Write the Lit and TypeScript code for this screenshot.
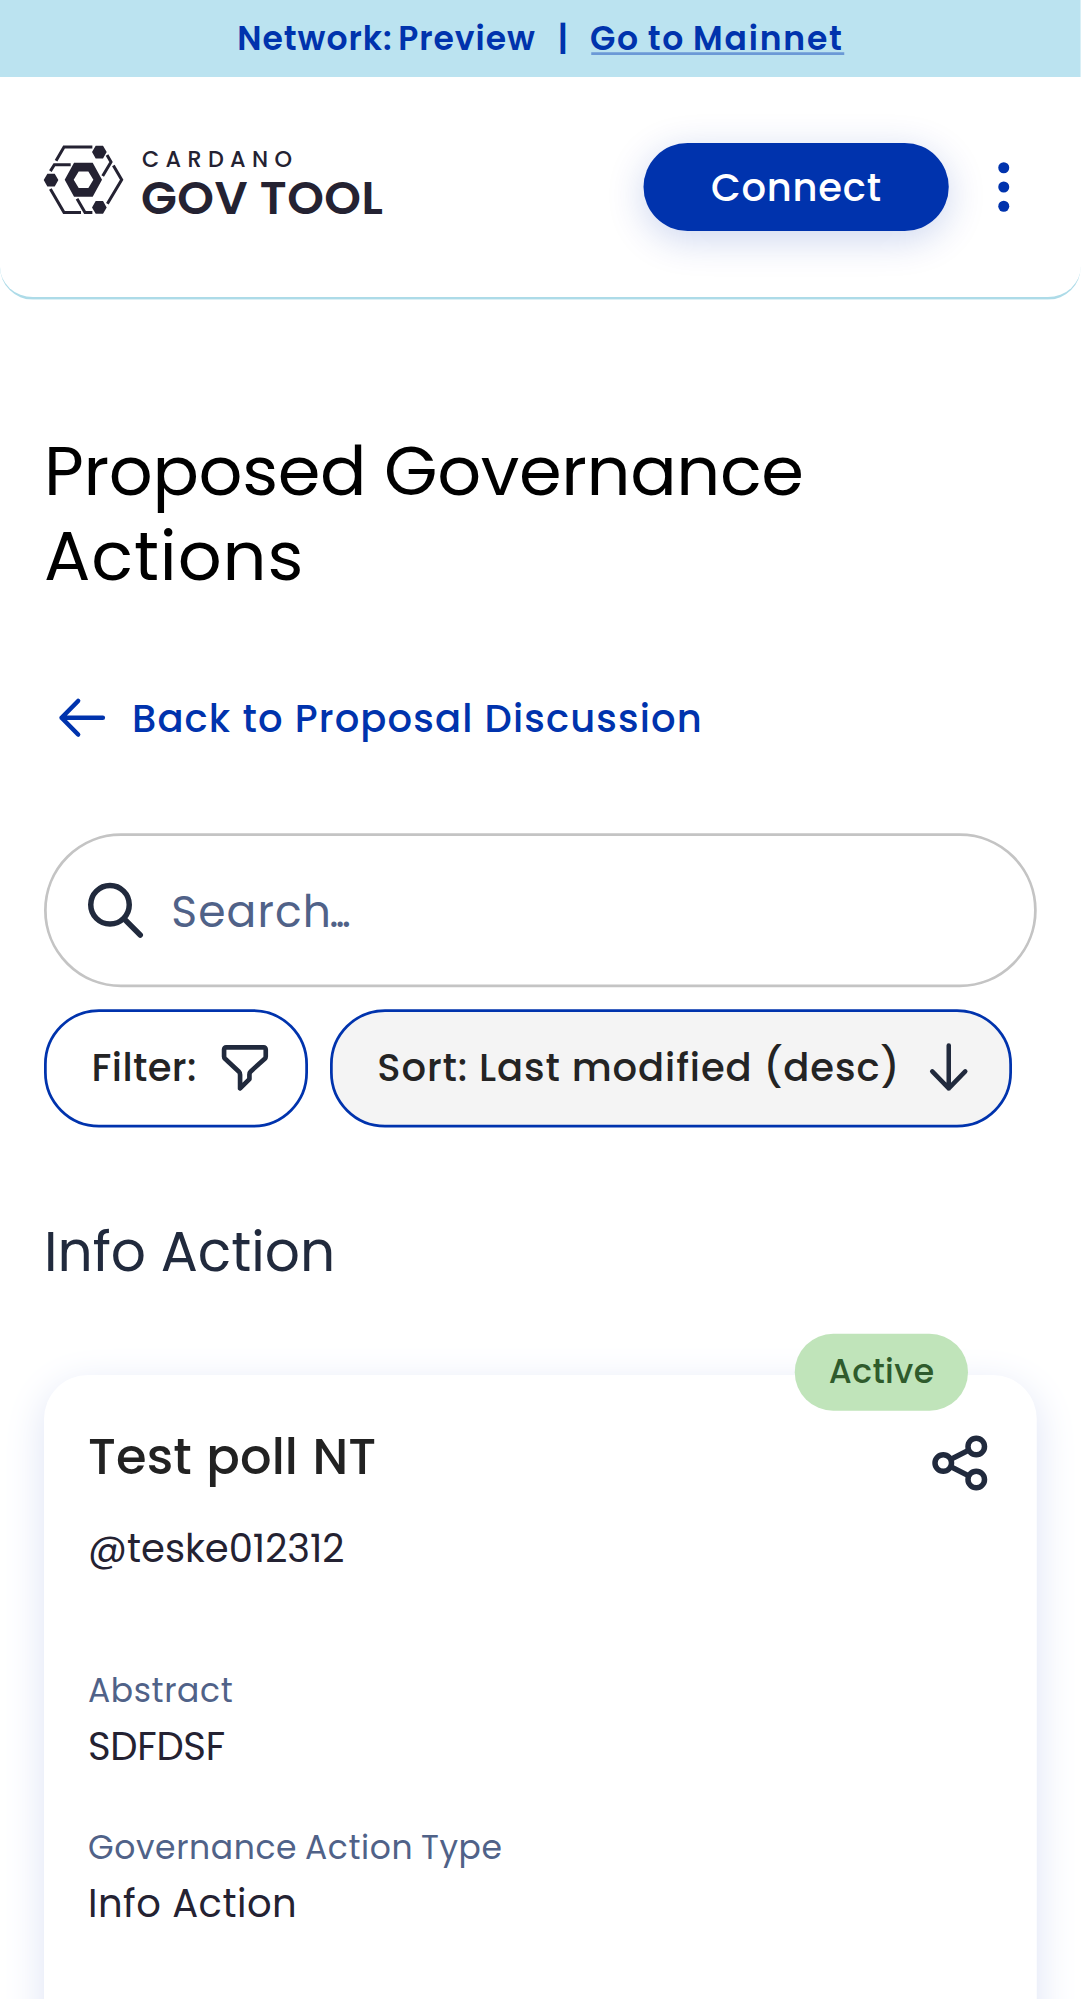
import { LitElement, html, css } from "lit";
import { customElement, property } from "lit/decorators.js";

@customElement("gov-banner")
export class GovBanner extends LitElement {
  static styles = css`
    :host { display: flex; justify-content: center; height: 28px; background: #bbe3f0;
      color: #0033ad; font-size: 12px; line-height: 28px; font-weight: 600; white-space: pre; }
    .net { letter-spacing: .35px; word-spacing: -1.200px; }
    .sep { width: 19.700px; text-align: center; }
    .link { height: 19px; border-bottom: 1px solid #6b99d6; letter-spacing: .66px; word-spacing: -.700px; }
  `;
  render() {
    return html`<span class="net">Network: Preview</span><span class="sep">|</span><a class="link">Go to Mainnet</a>`;
  }
}

@customElement("gov-header")
export class GovHeader extends LitElement {
  static styles = css`
    :host { display: flex; align-items: center; box-sizing: border-box; height: 81px; padding: 0 16px;
      border-bottom: 1px solid #addbe8; border-radius: 0 0 12px 12px; background: #fff; color: #242232; }
    .logo { width: 123.150px; height: 24.730px; margin: 0 auto 5px 0; flex: none; overflow: visible; }
    .connect { width: 111px; height: 32px; border-radius: 16px; background: #0033ad; color: #fff; text-align: center;
      font-size: 14px; line-height: 32px; font-weight: 500; letter-spacing: .28px;
      box-shadow: 0 3px 14px rgba(0, 51, 173, .2); }
    .dots { margin: 0 0 0 8px; width: 24px; height: 24px; flex: none; }
  `;
  render() {
    return html`
      <svg class="logo" viewBox="42 48 1016 204" fill="none" stroke="#242232" stroke-width="9">
        <path d="M187 52H102L78 93M61 124l12-19h49M61 178l41 70h51M141 207l24 41h22M231 76l12 21-25 42M250 107l25 43-43 72"/>
        <g fill="#242232" stroke="none">
          <path d="M197 48h22l11 19-11 19h-22l-11-19zM52 132h22l11 19-11 19H52l-11-19zM197 214h22l11 19-11 19h-22l-11-19z"/>
          <path fill-rule="evenodd" d="M132 99h56l28 51-28 51h-56l-28-51zM146 125l-15 25 15 25h29l15-25-15-25z"/>
          <text x="336" y="113" font-size="67" font-weight="500" textLength="450">CARDANO</text>
          <text x="333" y="252" font-size="140" font-weight="600" textLength="726">GOV TOOL</text>
        </g>
      </svg>
      <div class="connect">Connect</div>
      <svg class="dots" viewBox="0 0 24 24" fill="#0033ad">
        <circle cx="12" cy="5" r="2"/><circle cx="12" cy="12" r="2"/><circle cx="12" cy="19" r="2"/>
      </svg>`;
  }
}

@customElement("action-card")
export class ActionCard extends LitElement {
  @property() name = "";
  @property() author = "";
  @property() status = "";
  @property({ attribute: false }) fields: { label: string; value: string }[] = [];

  static styles = css`
    :host { display: block; position: relative; box-sizing: border-box; height: 280px; padding: 18px 16px 0;
      border-radius: 16px; background: #fff; box-shadow: 0 4px 15px #dde3f5; color: #242232; white-space: nowrap; }
    .badge { position: absolute; top: -15px; right: 25px; width: 63px; height: 28px; border-radius: 14px;
      background: #c0e4ba; color: #2f5b2c; font-size: 12px; line-height: 28px; font-weight: 500; text-align: center;
      letter-spacing: .16px; }
    .head { display: flex; justify-content: space-between; height: 24px; }
    .name { color: #222; font-size: 18px; line-height: 24px; font-weight: 500; letter-spacing: .05px; word-spacing: .500px; }
    .share { width: 24px; height: 24px; margin-top: 2px; }
    .author { margin: 11px 0 32.500px; font-size: 14px; line-height: 20px; }
    .label { font-size: 12px; line-height: 18px; margin-bottom: 1.500px; color: #506288; letter-spacing: .22px; word-spacing: -.600px; }
    .value { font-size: 14px; line-height: 20px; margin-bottom: 17.700px; letter-spacing: .18px; }
    .value.caps { letter-spacing: -.1px; }
  `;
  render() {
    return html`
      <div class="badge">${this.status}</div>
      <div class="head">
        <span class="name">${this.name}</span>
        <svg class="share" viewBox="0 0 24 24" fill="none" stroke="#212a3d" stroke-width="2">
          <circle cx="6" cy="12" r="3"/><circle cx="18" cy="6" r="3"/><circle cx="18" cy="18" r="3"/>
          <path d="M8.700 10.700l6.600-3.400M8.700 13.300l6.600 3.400"/>
        </svg>
      </div>
      <div class="author">${this.author}</div>
      ${this.fields.map(f => html`
        <div class="label">${f.label}</div>
        <div class="value ${f.value === f.value.toUpperCase() ? "caps" : ""}">${f.value}</div>`)}`;
  }
}

@customElement("app-root")
export class AppRoot extends LitElement {
  static styles = css`
    :host { display: block; height: 1999px; overflow: hidden; background: #fff; color: #242424;
      font-family: Poppins, Inter, "Open Sans", sans-serif; }
    .screen { width: 393.100px; height: 727px; overflow: hidden; transform: scale(2.75); transform-origin: 0 0; background: #fff; }
    main { padding: 47px 16px 0; }
    h1, h2 { margin: 0; font-weight: 400; }
    h1 { font-size: 25px; line-height: 31px; color: #000; letter-spacing: -.13px; }
    h1 span { display: block; }
    h1 span + span { letter-spacing: .33px; }
    .back { display: flex; align-items: center; margin-top: 31px; height: 24px; color: #0033ad;
      font-size: 14px; line-height: 24px; font-weight: 500; letter-spacing: .410px; }
    .back svg { width: 24px; height: 24px; margin: 0 6px 0 2px; }
    .search { display: flex; align-items: center; box-sizing: border-box; height: 56px; margin-top: 30px;
      border: 1px solid #c4c4c4; border-radius: 28px; color: #506288; font-size: 16px; letter-spacing: .400px; }
    .search svg { width: 24px; height: 24px; margin: 0 8.300px 0 13px; }
    .search i { font-style: normal; letter-spacing: -1.100px; margin-left: -1px; }
    .chips { display: flex; gap: 8px; margin-top: 8px; }
    .chip { display: flex; align-items: center; justify-content: space-between; box-sizing: border-box; height: 43px;
      border: 1px solid #0033ad; border-radius: 20px; font-size: 14px; font-weight: 500; white-space: nowrap; }
    .filter { width: 96px; padding: 0 10px 0 16.300px; letter-spacing: .15px; }
    .sort { width: 248px; padding: 0 10px 0 16.200px; background: #f4f4f4; letter-spacing: .33px; }
    .chip svg { width: 24px; height: 24px; }
    h2 { margin: 32px 0; font-size: 20px; line-height: 26px; color: #212a3d; }
  `;
  render() {
    return html`
      <div class="screen">
      <gov-banner></gov-banner>
      <gov-header></gov-header>
      <main>
        <h1><span>Proposed Governance</span><span>Actions</span></h1>
        <div class="back">
          <svg viewBox="0 0 24 24" fill="none" stroke="#0033ad" stroke-width="1.650" stroke-linecap="round" stroke-linejoin="round">
            <path d="M4.400 12H19.400M10.400 5.900L4.400 12l6 6.100"/>
          </svg>
          <span>Back to Proposal Discussion</span>
        </div>
        <div class="search">
          <svg viewBox="0 0 24 24" fill="none" stroke="#212a3d" stroke-width="2" stroke-linecap="round">
            <circle cx="10" cy="10" r="7"/><path d="M15.200 15.200l5.800 5.800"/>
          </svg>
          <span>Search<i>...</i></span>
        </div>
        <div class="chips">
          <div class="chip filter"><span>Filter:</span>
            <svg viewBox="545 647 198 198" fill="none" stroke="#212a3d" stroke-width="14" stroke-linejoin="round">
              <path d="M588 679H701a6 6 0 0 1 6 6V706q0 4-3 7L662 751q-4 4-4 9V774L630 802V761q0-6-4-10L585 713q-3-3-3-7V685a6 6 0 0 1 6-6z"/>
            </svg>
          </div>
          <div class="chip sort"><span>Sort: Last modified (desc)</span>
            <svg viewBox="0 0 24 24" fill="none" stroke="#212a3d" stroke-width="1.650" stroke-linecap="round" stroke-linejoin="round">
              <path d="M12 3.200V18.800M6 12.600l6 6.200 6-6.200"/>
            </svg>
          </div>
        </div>
        <h2>Info Action</h2>
        <action-card name="Test poll NT" author="@teske012312" status="Active"
          .fields=${[{ label: "Abstract", value: "SDFDSF" }, { label: "Governance Action Type", value: "Info Action" }]}></action-card>
      </main>
      </div>`;
  }
}
